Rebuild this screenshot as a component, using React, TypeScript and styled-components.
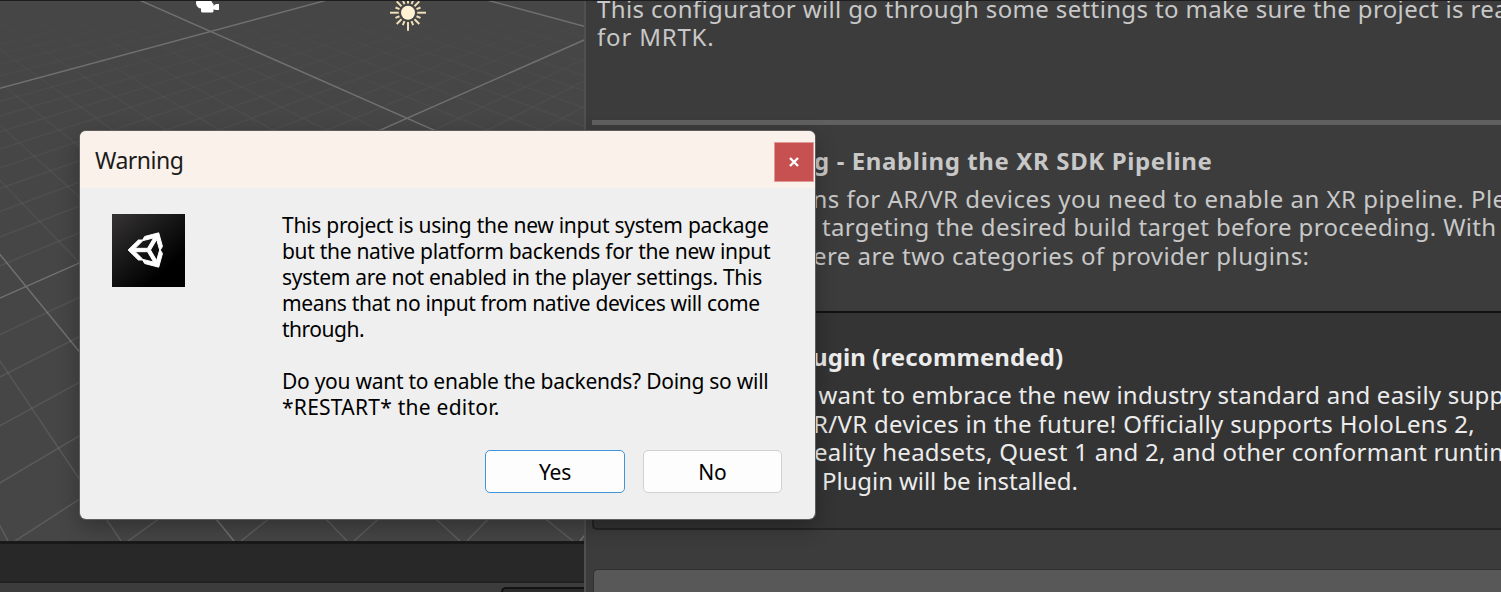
import React from "react";
import styled, { createGlobalStyle } from "styled-components";
import { FaUnity } from "react-icons/fa";

const GlobalStyle = createGlobalStyle`
  * {
    box-sizing: border-box;
  }
  body {
    margin: 0;
    overflow: hidden;
    background: #3c3c3c;
    font-family: "Noto Sans", "Open Sans", sans-serif;
  }
`;

const Editor = styled.div`
  position: relative;
  display: grid;
  grid-template-columns: 584px 1fr;
  width: 1501px;
  height: 592px;
  overflow: hidden;
  background: #3c3c3c;
  border-top: 1px solid #1d1c1f;
`;

const LeftDock = styled.div`
  display: flex;
  flex-direction: column;
  min-width: 0;
`;

const SceneView = styled.svg`
  display: block;
  width: 585px;
  height: 540px;
  background: #464646;
`;

const TabStrip = styled.div`
  height: 42px;
  background: #282828;
  border-top: 3px solid #191919;
  border-bottom: 2px solid #212121;
`;

const Toolbar = styled.div`
  display: flex;
  flex: 1;
  justify-content: flex-end;
  align-items: flex-end;
  background: #3c3c3c;
`;

const SearchBox = styled.div`
  width: 83px;
  height: 5px;
  background: #2a2a2a;
  border: 2px solid #131313;
  border-width: 2px 0 0 2px;
  border-top-left-radius: 5px;
`;

const Configurator = styled.div`
  display: flex;
  flex-direction: column;
  min-width: 0;
  padding-left: 6px;
  border-left: 2px solid #505050;
  overflow: hidden;
`;

const Intro = styled.div`
  display: flex;
  flex-direction: column;
  justify-content: flex-end;
  height: 119px;
  padding: 0 0 68.4px 5px;
  color: #c8c8c8;
`;

const Divider = styled.div`
  height: 5px;
  background: #606060;
`;

const Section = styled.div`
  height: 186px;
  padding: 22px 0 0 222px;
  color: #c8c8c8;
`;

const PluginBox = styled.div`
  height: 219px;
  padding: 30.4px 0 0 219px;
  color: #ececec;
  background: #343434;
  border: 2px solid #242424;
  border-top-color: #111;
  border-right: 0;
  border-radius: 5px 0 0 5px;
`;

const WideButton = styled.div`
  flex: 1;
  margin: 39px 0 0 1px;
  background: #585858;
  border: 1px solid #303030;
  border-width: 1px 0 0 1px;
  border-top-left-radius: 5px;
`;

const Line = styled.div<{ $spacing?: number; $indent?: number }>`
  flex-shrink: 0;
  height: 28.4px;
  margin-left: ${(p) => p.$indent ?? 0}px;
  font-size: 24px;
  line-height: 28.4px;
  letter-spacing: ${(p) => p.$spacing ?? 0}px;
  white-space: nowrap;
`;

const Heading = styled(Line)`
  height: 38px;
  font-weight: 700;
`;

const Dialog = styled.div`
  position: absolute;
  top: 130px;
  left: 80px;
  display: flex;
  flex-direction: column;
  width: 735px;
  height: 388px;
  overflow: hidden;
  background: #efefef;
  border-radius: 6px;
`;

const DialogShadow = styled.div`
  position: absolute;
  top: 130px;
  left: 80px;
  width: 735px;
  height: 388px;
  border-radius: 6px;
  box-shadow: 0 0 0 1px #5e5c5c, 0 8px 22px rgba(0, 0, 0, 0.3);
`;

const TitleBar = styled.div`
  display: flex;
  justify-content: space-between;
  height: 57px;
  padding: 11px 1px 0 15px;
  background: #f9f1ea;
`;

const Title = styled.div`
  color: #1b1b1b;
  font-size: 23px;
  line-height: 36px;
  letter-spacing: -0.5px;
`;

const CloseButton = styled.button`
  display: grid;
  place-items: center;
  width: 40px;
  height: 40px;
  padding: 0;
  background: #c75050;
  border: 1px solid #e09a98;
`;

const DialogBody = styled.div`
  display: flex;
  flex: 1;
  padding: 26px 0 0 32px;
`;

const AppIcon = styled.svg`
  width: 73px;
  height: 73px;
  margin-right: 97px;
`;

const Message = styled.div`
  margin-top: -2px;
  color: #000;
`;

const MessageLine = styled.div<{ $spacing?: number }>`
  height: 26px;
  font-size: 21px;
  line-height: 26px;
  letter-spacing: ${(p) => p.$spacing ?? 0}px;
  white-space: nowrap;
`;

const Actions = styled.div`
  display: flex;
  gap: 18px;
  justify-content: flex-end;
  padding: 0 33px 26px 0;
`;

const ActionButton = styled.button<{ $primary?: boolean }>`
  width: ${(p) => (p.$primary ? 140 : 139)}px;
  height: 43px;
  padding: 0;
  color: #000;
  font: 21px/40px "Noto Sans", sans-serif;
  letter-spacing: -0.2px;
  background: #fdfdfd;
  border: 1px solid ${(p) => (p.$primary ? "#3f94da" : "#d0d0d0")};
  border-radius: 5px;
`;

const HORIZON = -240;
const BOTTOM = 541;
const GRID_STEP = 113;

interface GridFamily {
  vanishX: number;
  startX: number;
}

const families: GridFamily[] = [
  { vanishX: -404, startX: 234 },
  { vanishX: 1218, startX: 580 },
];

const steps = Array.from({ length: 61 }, (_, i) => i - 30);

const Grid = () => (
  <g fill="none">
    {families.map(({ vanishX, startX }) =>
      steps.map((step) => {
        const major = step % 10 === 0;
        return (
          <line
            key={`${vanishX}-${step}`}
            x1={vanishX}
            y1={HORIZON}
            x2={startX + step * GRID_STEP}
            y2={BOTTOM}
            stroke={major ? "#707070" : "url(#minor)"}
            strokeWidth={major ? 1.5 : 1.4}
          />
        );
      })
    )}
  </g>
);

const sunRays = Array.from({ length: 16 }, (_, i) => i * 22.5);

const rayLength = (angle: number) => {
  if (angle % 90 === 0) return 18;
  return angle % 45 === 0 ? 16 : 13.5;
};

const Scene = () => (
  <SceneView viewBox="0 1 585 540">
    <defs>
      <linearGradient id="minor" gradientUnits="userSpaceOnUse" x1="0" y1="0" x2="0" y2="541">
        <stop offset="0" stopColor="#fff" stopOpacity="0" />
        <stop offset="0.2" stopColor="#fff" stopOpacity="0.03" />
        <stop offset="0.6" stopColor="#fff" stopOpacity="0.07" />
        <stop offset="1" stopColor="#fff" stopOpacity="0.13" />
      </linearGradient>
    </defs>
    <Grid />
    <g fill="#fff">
      <circle cx="201.5" cy="3" r="5.5" />
      <circle cx="208" cy="4" r="4.5" />
      <rect x="201" y="3" width="12.500" height="9.500" rx="1.500" />
      <path d="M212 6.500 214.500 5 216 4h3v6h-3l-4-1z" />
    </g>
    <g transform="translate(408 12.700)">
      {sunRays.map((angle) => (
        <g key={angle} transform={`rotate(${angle})`}>
          <line y1="-8.800" y2={-rayLength(angle) - 0.4} stroke="#4b463a" strokeOpacity="0.6" strokeWidth="3" />
          <line y1="-9.200" y2={-rayLength(angle)} stroke="#efe0bd" strokeWidth="2" />
        </g>
      ))}
      <circle r="7" fill="#fff1d2" />
    </g>
  </SceneView>
);

const UnityIcon = () => (
  <AppIcon viewBox="0 0 73 73">
    <defs>
      <linearGradient id="tile" x1="0" y1="0" x2="0.7" y2="0.8">
        <stop offset="0" stopColor="#363435" />
        <stop offset="1" stopColor="#000" />
      </linearGradient>
    </defs>
    <rect width="73" height="73" fill="url(#tile)" />
    <FaUnity x={15} y={15.5} size={41} color="#fff" stroke="#fff" strokeWidth={14} />
  </AppIcon>
);

const App: React.FC = () => {
  return (
    <>
      <GlobalStyle />
      <Editor>
        <LeftDock>
          <Scene />
          <TabStrip />
          <Toolbar>
            <SearchBox />
          </Toolbar>
        </LeftDock>
        <Configurator>
          <Intro>
            <Line $spacing={0.36}>
              This configurator will go through some settings to make sure the project is ready
            </Line>
            <Line $spacing={0.8}>for MRTK.</Line>
          </Intro>
          <Divider />
          <Section>
            <Heading $spacing={0.62}>g - Enabling the XR SDK Pipeline</Heading>
            <Line $spacing={0.5} $indent={-1.5}>
              ns for AR/VR devices you need to enable an XR pipeline. Please
            </Line>
            <Line $spacing={0.34} $indent={8}>
              targeting the desired build target before proceeding. With
            </Line>
            <Line $spacing={0.45} $indent={-1}>
              ere are two categories of provider plugins:
            </Line>
          </Section>
          <PluginBox>
            <Heading $spacing={0.1} $indent={-1}>
              ugin (recommended)
            </Heading>
            <Line $spacing={0.22} $indent={5.5}>
              want to embrace the new industry standard and easily support
            </Line>
            <Line $spacing={0.32}>R/VR devices in the future! Officially supports HoloLens 2,</Line>
            <Line $spacing={0.25} $indent={1}>
              eality headsets, Quest 1 and 2, and other conformant runtimes.
            </Line>
            <Line $spacing={-0.07} $indent={9}>
              Plugin will be installed.
            </Line>
          </PluginBox>
          <WideButton />
        </Configurator>
        <DialogShadow />
        <Dialog>
          <TitleBar>
            <Title>Warning</Title>
            <CloseButton aria-label="Close">
              <svg width="10" height="10" viewBox="0 0 10 10">
                <path d="M1 1 9 9M9 1 1 9" stroke="#fff" strokeWidth="2.400" />
              </svg>
            </CloseButton>
          </TitleBar>
          <DialogBody>
            <UnityIcon />
            <Message>
              <MessageLine $spacing={-0.27}>This project is using the new input system package</MessageLine>
              <MessageLine $spacing={-0.3}>but the native platform backends for the new input</MessageLine>
              <MessageLine $spacing={-0.29}>system are not enabled in the player settings. This</MessageLine>
              <MessageLine $spacing={-0.35}>means that no input from native devices will come</MessageLine>
              <MessageLine $spacing={-0.5}>through.</MessageLine>
              <MessageLine />
              <MessageLine $spacing={-0.27}>Do you want to enable the backends? Doing so will</MessageLine>
              <MessageLine $spacing={0.25}>*RESTART* the editor.</MessageLine>
            </Message>
          </DialogBody>
          <Actions>
            <ActionButton $primary>Yes</ActionButton>
            <ActionButton>No</ActionButton>
          </Actions>
        </Dialog>
      </Editor>
    </>
  );
};

export default App;
